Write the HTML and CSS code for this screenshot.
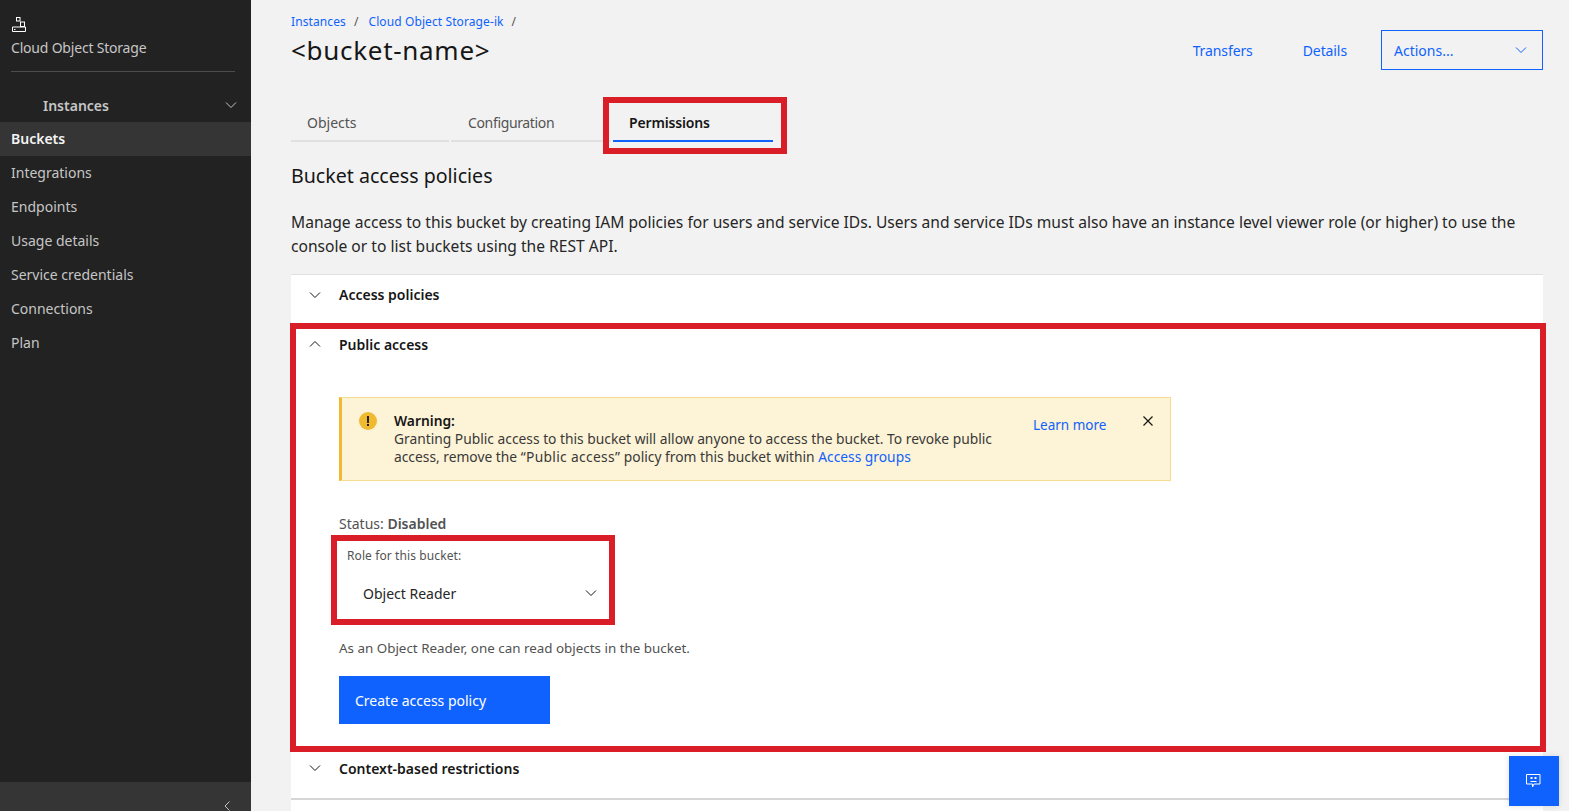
FILE: index.html
```html
<!DOCTYPE html>
<html lang="en">

<head>
    <meta charset="UTF-8">
    <meta name="viewport" content="width=device-width, initial-scale=1.0">
    <title>Bucket permissions</title>
    <link rel="stylesheet" href="styles.css">
</head>

<body>

    <aside class="sidebar">
        <div class="side-head">
            <svg class="side-logo" width="16" height="16" viewBox="0 0 16 16" fill="none" stroke="#fff" stroke-width="1">
                <rect x="5.5" y="1.5" width="3.5" height="3.5"/>
                <rect x="9.5" y="6" width="4" height="4.5"/>
                <path d="M1.5 11H14.5V15.5H1.5Z"/>
                <path d="M3 13.5h1.5"/>
            </svg>
            <div class="side-title">Cloud Object Storage</div>
        </div>
        <div class="side-group">
            <span>Instances</span>
            <svg class="chev" width="12" height="12" viewBox="0 0 12 12"><path d="M1 3.5l5 5 5-5"/></svg>
        </div>
        <nav class="side-nav">
            <a class="side-link active">Buckets</a>
            <a class="side-link">Integrations</a>
            <a class="side-link">Endpoints</a>
            <a class="side-link">Usage details</a>
            <a class="side-link">Service credentials</a>
            <a class="side-link">Connections</a>
            <a class="side-link">Plan</a>
        </nav>
        <div class="side-collapse">
            <svg class="chev" width="12" height="12" viewBox="0 0 12 12"><path d="M8.5 1.5l-4.5 4.5 4.5 4.5"/></svg>
        </div>
    </aside>

    <main class="content">
        <header class="page-head">
            <div>
                <div class="crumbs">
                    <a>Instances</a><span>/</span><a>Cloud Object Storage-ik</a><span>/</span>
                </div>
                <h1>&lt;bucket-name&gt;</h1>
            </div>
            <div class="head-actions">
                <a class="head-link">Transfers</a>
                <a class="head-link">Details</a>
                <div class="actions-btn">
                    <span>Actions...</span>
                    <svg class="chev blue" width="12" height="12" viewBox="0 0 12 12"><path d="M1 3.5l5 5 5-5"/></svg>
                </div>
            </div>
        </header>

        <div class="tabs">
            <div class="tab">Objects</div>
            <div class="tab config">Configuration</div>
            <div class="tab selected">Permissions</div>
        </div>

        <h2>Bucket access policies</h2>
        <p class="intro">Manage access to this bucket by creating IAM policies for users and service IDs. Users and service IDs must also have an instance level viewer role (or higher) to use the console or to list buckets using the REST API.</p>

        <div class="accordion">
            <div class="acc-item first">
                <svg class="chev" width="12" height="12" viewBox="0 0 12 12"><path d="M1 3.5l5 5 5-5"/></svg>
                <span>Access policies</span>
            </div>

            <section class="public-box">
                <div class="acc-item open">
                    <svg class="chev" width="12" height="12" viewBox="0 0 12 12"><path d="M1 8.5l5-5 5 5"/></svg>
                    <span>Public access</span>
                </div>
                <div class="public-body">
                    <div class="notice">
                        <svg class="notice-icon" width="18" height="18" viewBox="0 0 18 18">
                            <circle cx="9" cy="9" r="9" fill="#f1b92f"/>
                            <rect x="8" y="4" width="2" height="7" fill="#222"/>
                            <rect x="8" y="12" width="2" height="2" fill="#222"/>
                        </svg>
                        <div class="notice-text">
                            <strong>Warning:</strong><br>
                            Granting Public access to this bucket will allow anyone to access the bucket. To revoke public access, remove the <span class="quoted">“Public access”</span> policy from this bucket within <a>Access groups</a>
                        </div>
                        <a class="learn">Learn more</a>
                        <svg class="notice-close" width="12" height="12" viewBox="0 0 12 12"><path d="M1.5 1.5l9 9M10.5 1.5l-9 9"/></svg>
                    </div>

                    <div class="status">Status: <b>Disabled</b></div>

                    <div class="role-box">
                        <div class="role-label">Role for this bucket:</div>
                        <div class="role-select">
                            <span>Object Reader</span>
                            <svg class="chev" width="12" height="12" viewBox="0 0 12 12"><path d="M1 3.5l5 5 5-5"/></svg>
                        </div>
                    </div>

                    <p class="role-desc">As an Object Reader, one can read objects in the bucket.</p>
                    <button class="primary">Create access policy</button>
                </div>
            </section>

            <div class="acc-item last">
                <svg class="chev" width="12" height="12" viewBox="0 0 12 12"><path d="M1 3.5l5 5 5-5"/></svg>
                <span>Context-based restrictions</span>
            </div>
            <div class="acc-rest"></div>
        </div>
    </main>

    <div class="chat-btn">
        <svg width="16" height="16" viewBox="0 0 16 16" fill="none" stroke="#fff" stroke-width="1">
            <path d="M0.5 1.5H14V11H8L6.5 14V11H0.5Z"/>
            <rect x="4.5" y="4" width="2" height="2" fill="#fff" stroke="none"/>
            <rect x="8.5" y="4" width="2" height="2" fill="#fff" stroke="none"/>
            <path d="M4.5 8.5H10.5"/>
        </svg>
    </div>

</body>

</html>
```

FILE: styles.css
```css
* {
    box-sizing: border-box;
}

html,
body {
    height: 811px;
}

body {
    margin: 0;
    display: flex;
    overflow: hidden;
    font-family: 'Noto Sans', 'Open Sans', sans-serif;
    font-size: 14px;
    color: #161616;
    background-color: #f2f2f2;
}

a {
    color: #0f62fe;
}

.chev {
    fill: none;
    stroke: #161616;
    stroke-width: 1;
    flex: none;
}

.chev.blue {
    stroke: #0f62fe;
}

/* sidebar */
.sidebar {
    width: 251px;
    flex: none;
    display: flex;
    flex-direction: column;
    background-color: #222;
    color: #c6c6c6;
}

.side-head {
    margin: 0 16px 0 11px;
    padding-top: 16px;
    height: 72px;
    border-bottom: 1px solid #4c4c4c;
}

.side-logo {
    display: block;
}

.side-title {
    margin-top: 6px;
    line-height: 19px;
    letter-spacing: -0.2px;
}

.side-group {
    height: 50px;
    padding: 16px 14px 0 43px;
    display: flex;
    align-items: center;
    justify-content: space-between;
    font-weight: 600;
}

.side-group .chev,
.side-collapse .chev {
    stroke: #c6c6c6;
}

.side-link {
    display: block;
    height: 34px;
    line-height: 34px;
    padding-left: 11px;
    color: #c6c6c6;
}

.side-link.active {
    background-color: #353535;
    color: #f4f4f4;
    font-weight: 600;
}

.side-nav {
    flex: 1;
}

.side-collapse {
    height: 29px;
    padding: 18px 18px 0 0;
    display: flex;
    justify-content: flex-end;
    background-color: #353535;
}

/* main */
.content {
    flex: 1;
    min-width: 0;
    padding: 0 26px 0 40px;
}

.page-head {
    display: flex;
    justify-content: space-between;
    height: 70px;
}

.crumbs {
    display: flex;
    gap: 8px;
    margin-top: 14px;
    font-size: 12px;
    line-height: 16px;
    letter-spacing: 0.1px;
    color: #525252;
}

.crumbs span {
    margin-right: 2px;
}

h1 {
    margin: 3px 0 0;
    font-size: 26px;
    line-height: 34px;
    font-weight: 400;
    letter-spacing: 0.7px;
}

.head-actions {
    display: flex;
    align-items: center;
    margin-top: 30px;
    height: 40px;
}

.head-link {
    margin-right: 50px;
    letter-spacing: -0.1px;
}

.head-link + .head-link {
    margin-right: 34px;
}

.actions-btn {
    width: 162px;
    height: 40px;
    padding: 0 15px 0 12px;
    display: flex;
    align-items: center;
    justify-content: space-between;
    border: 1px solid #0f62fe;
    color: #0f62fe;
}

.tabs {
    display: flex;
    gap: 2px;
    margin-top: 33px;
}

.tab {
    width: 160px;
    height: 39px;
    padding: 10px 0 0 16px;
    line-height: 19px;
    color: #525252;
    border-bottom: 2px solid #e0e0e0;
}

.tab:first-child {
    width: 158px;
}

.tab.config {
    padding-left: 17px;
    letter-spacing: -0.35px;
}

.tab.selected {
    position: relative;
    font-weight: 600;
    letter-spacing: -0.15px;
    color: #161616;
    border-bottom-color: #0f62fe;
}

/* red annotation frame round the selected tab */
.tab.selected::after {
    content: "";
    position: absolute;
    top: -6px;
    left: -10px;
    right: -14px;
    bottom: -14px;
    border: 6px solid #da1e28;
}

h2 {
    margin: 22px 0 0;
    font-size: 19.6px;
    line-height: 24px;
    font-weight: 400;
}

.intro {
    margin: 22px 0 0;
    line-height: 24px;
    font-size: 15.6px;
    color: #262626;
}

.accordion {
    margin-top: 16px;
    background-color: #fff;
    border-top: 1px solid #e0e0e0;
}

.acc-item {
    display: flex;
    align-items: center;
    gap: 18px;
    padding-left: 18px;
    font-weight: 600;
}

.acc-item.first {
    height: 48px;
    padding-bottom: 9px;
}

.acc-item.open {
    height: 44px;
    padding: 0 0 14px 13px;
}

.acc-item.last {
    height: 48px;
    padding-bottom: 14px;
    border-bottom: 2px solid #d6d6d6;
}

.acc-rest {
    height: 20px;
}

.public-box {
    height: 429px;
    margin: 0 -3px 0 -1px;
    border: 6px solid #da1e28;
}

.public-body {
    padding: 24px 0 0 43px;
}

.notice {
    width: 832px;
    height: 84px;
    display: flex;
    align-items: flex-start;
    padding: 14px 0 0 17px;
    background-color: #fdf3d6;
    border: 1px solid #f6dc8d;
    border-left: 3px solid #f1b92f;
    line-height: 18px;
    color: #393939;
}

.notice-icon {
    flex: none;
}

.notice-text {
    width: 620px;
    flex: none;
    margin-left: 17px;
    font-size: 13.8px;
}

.notice-text strong {
    font-weight: 600;
    color: #161616;
}

.quoted {
    letter-spacing: 0.33px;
}

.learn {
    flex: none;
    margin: 4px 0 0 19px;
    font-size: 13.5px;
}

.notice-close {
    flex: none;
    margin: 3px 0 0 36px;
    fill: none;
    stroke: #161616;
    stroke-width: 1.2;
}

.status {
    margin-top: 34px;
    line-height: 18px;
    color: #525252;
}

.status b {
    font-weight: 600;
}

.role-box {
    width: 284px;
    height: 90px;
    margin: 2px 0 0 -8px;
    padding: 7px 0 0 10px;
    border: 6px solid #da1e28;
}

.role-label {
    font-size: 12px;
    line-height: 16px;
    letter-spacing: 0.1px;
    color: #525252;
}

.role-select {
    display: flex;
    align-items: center;
    justify-content: space-between;
    height: 40px;
    margin-top: 9px;
    padding: 0 12px 0 16px;
    color: #262626;
}

.role-desc {
    margin: 14px 0 0;
    line-height: 18px;
    font-size: 13.4px;
    color: #525252;
}

.primary {
    display: block;
    width: 211px;
    height: 48px;
    margin-top: 19px;
    padding: 0 0 0 16px;
    border: 0;
    background-color: #0f62fe;
    color: #fff;
    font: inherit;
    text-align: left;
}

.chat-btn {
    position: fixed;
    left: 1509px;
    top: 756px;
    width: 50px;
    height: 50px;
    display: flex;
    align-items: center;
    justify-content: center;
    background-color: #0f62fe;
    box-shadow: 0 0 6px rgba(0, 0, 0, 0.12);
}
```
